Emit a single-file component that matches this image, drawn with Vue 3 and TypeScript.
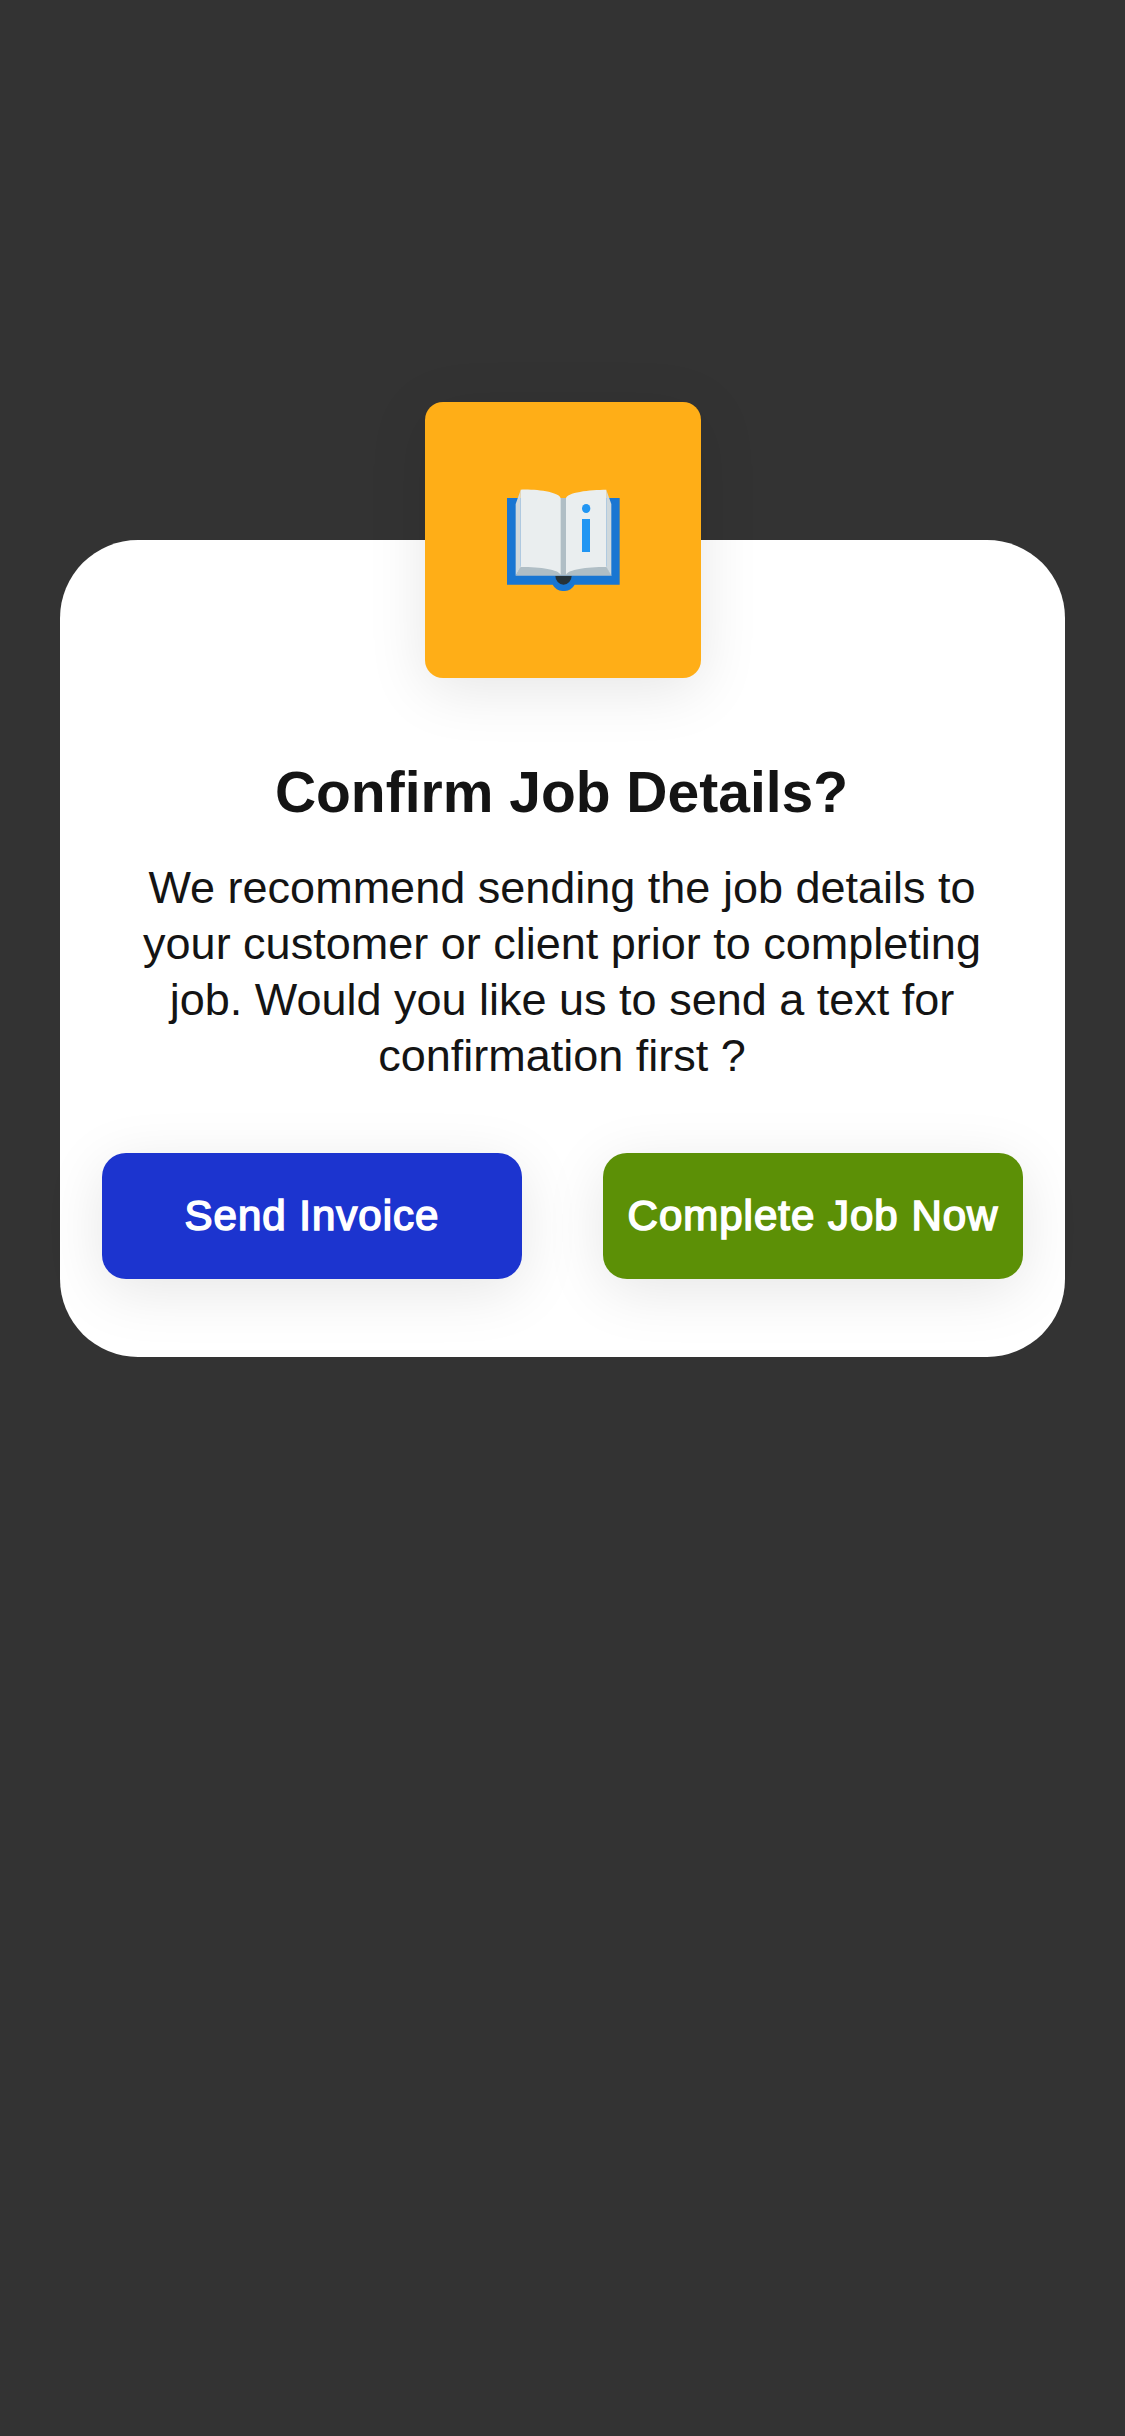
<script setup lang="ts">
const title: string = 'Confirm Job Details?'
const lines: string[] = [
  'We recommend sending the job details to',
  'your customer or client prior to completing',
  'job. Would you like us to send a text for',
  'confirmation first ?',
]
const actions: { label: string; kind: string }[] = [
  { label: 'Send Invoice', kind: 'invoice' },
  { label: 'Complete Job Now', kind: 'complete' },
]
</script>

<template>
  <main class="screen">
    <section class="card" role="dialog" aria-labelledby="dialog-title">
      <div class="badge">
        <svg class="book" viewBox="51 57 338 306" aria-hidden="true">
          <path fill="#1976d2" d="M51 84H389V344H254A38 38 0 0 1 188 344H51Z" />
          <path fill="#263238" d="M196 317H245A24.5 27 0 0 1 196 317Z" />
          <path fill="#b0bec5" d="M77 317L92 288L210 84H231L349 288L365 317Z" />
          <path fill="#cfd8dc" d="M92 60L77 102V317L92 291ZM349 60L364 102V317L349 291Z" />
          <path fill="#eaeeef" d="M92 59C141 57 212 67 212 86V314C205 299 154 291 92 291Z" />
          <path fill="#eaeeef" d="M349 59C300 59 228 67 228 86V314C235 299 287 291 349 291Z" />
          <ellipse fill="#2196f3" cx="288.500" cy="115.500" rx="12.500" ry="13.500" />
          <path fill="#2196f3" d="M276 147H300V246H276Z" />
        </svg>
      </div>
      <h1 id="dialog-title" class="title">{{ title }}</h1>
      <p class="message">
        <span v-for="line in lines" :key="line" class="line">{{ line }}</span>
      </p>
      <div class="actions">
        <button
          v-for="action in actions"
          :key="action.kind"
          type="button"
          class="button"
          :class="action.kind"
        >{{ action.label }}</button>
      </div>
    </section>
  </main>
</template>

<style>
body {
  margin: 0;
  background: #333333;
}
</style>

<style scoped>
.screen {
  box-sizing: border-box;
  min-height: 2436px;
  padding: 540px 60px 0;
  background: #333333;
  font-family: "Liberation Sans", Arial, sans-serif;
  color: #141414;
}
.card {
  position: relative;
  box-sizing: border-box;
  height: 817px;
  padding: 218px 42px 78px;
  border-radius: 78px;
  background: #ffffff;
}
.badge {
  position: absolute;
  top: -138px;
  left: 365px;
  display: flex;
  align-items: center;
  justify-content: center;
  width: 276px;
  height: 276px;
  border-radius: 18px;
  background: #ffae17;
  box-shadow: 0 12px 60px rgba(0, 0, 0, 0.1);
}
.book {
  display: block;
  width: 112.67px;
  height: 102px;
  margin-left: 1px;
}
.title {
  margin: 0;
  padding-right: 2px;
  font-size: 57px;
  line-height: 68px;
  font-weight: 700;
  text-align: center;
  white-space: nowrap;
}
.message {
  margin: 34px 0 69px;
  padding-right: 1px;
  font-size: 45px;
  line-height: 56px;
  text-align: center;
}
.line {
  display: block;
  white-space: nowrap;
}
.actions {
  display: flex;
  justify-content: space-between;
}
.button {
  width: 420px;
  height: 126px;
  padding: 0;
  border: 0;
  border-radius: 24px;
  color: #ffffff;
  font-family: inherit;
  font-size: 42px;
  font-weight: 400;
  letter-spacing: 1px;
  -webkit-text-stroke: 1.6px #ffffff;
  white-space: nowrap;
  box-shadow: 0 12px 60px rgba(0, 0, 0, 0.1);
}
.invoice {
  background: #1c34cf;
}
.complete {
  background: #5c9006;
}
</style>
